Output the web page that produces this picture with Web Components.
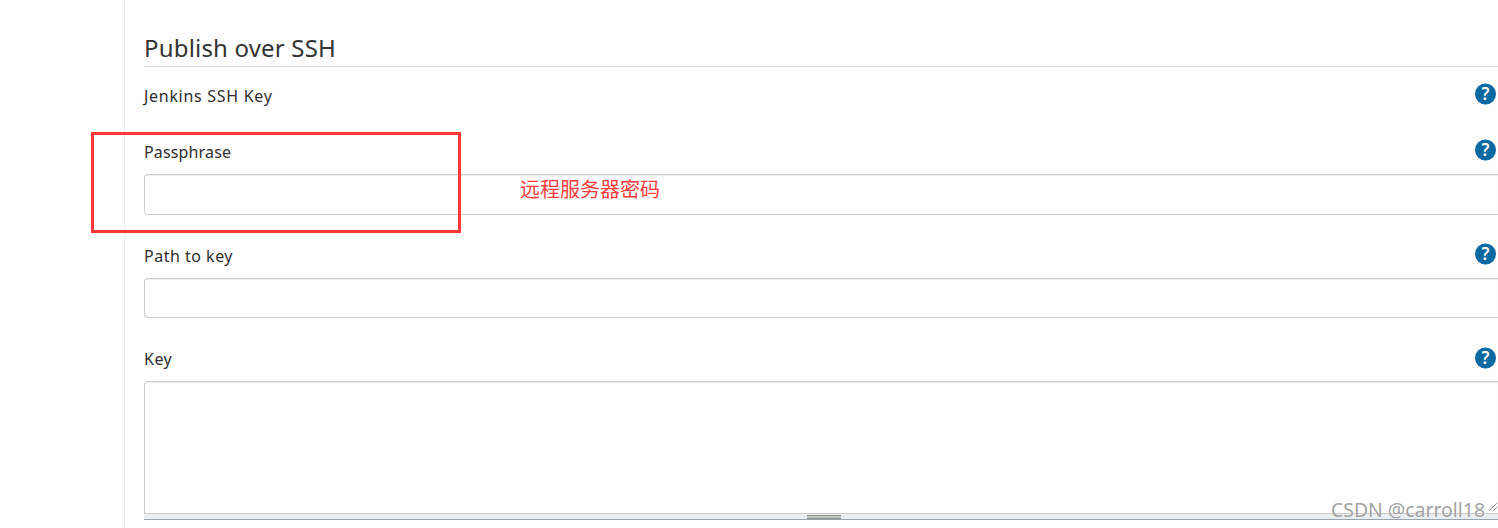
<!DOCTYPE html>
<html lang="en"><head><meta charset="utf-8"><title>Publish over SSH</title>
<style>
html,body{margin:0;padding:0;height:528px;overflow:hidden;background:#fff;font-family:"Noto Sans","Open Sans",sans-serif;color:#333}
</style></head><body>
<jk-page>
  <jk-section title-text="Publish over SSH">
    <jk-field label="Jenkins SSH Key" track=".7"></jk-field>
    <jk-field label="Passphrase" kind="input" track=".15" box="39" after="26"></jk-field>
    <jk-field label="Path to key" kind="input" track=".5" box="38" after="27"></jk-field>
    <jk-field label="Key" kind="textarea" track=".5" drop="2"></jk-field>
  </jk-section>
  <jk-note slot="over"></jk-note>
</jk-page>
<script>
class JkPage extends HTMLElement{constructor(){super();this.attachShadow({mode:'open'}).innerHTML=`<style>
:host{display:flex;width:1498px;height:528px;overflow:hidden;position:relative;box-sizing:border-box}
.side{flex:0 0 124px;border-right:1px solid #eceeef}
.main{flex:1;min-width:0;padding:30px 0 0 19px}
</style><div class="side"></div><div class="main"><slot></slot></div><slot name="over"></slot>`}}
class JkSection extends HTMLElement{constructor(){super();this.attachShadow({mode:'open'}).innerHTML=`<style>
:host{display:block}
h2{margin:0 0 14px;font:400 24px/35px "Noto Sans","Open Sans",sans-serif;color:#333;height:36px;border-bottom:1px solid #ddd;letter-spacing:.18px}
</style><h2></h2><slot></slot>`;this.shadowRoot.querySelector('h2').textContent=this.getAttribute('title-text')}}
class JkHelp extends HTMLElement{constructor(){super();this.attachShadow({mode:'open'}).innerHTML=`<style>
:host{display:block;width:22px;height:22px}
svg{display:block}text{font:600 17px "Noto Sans",sans-serif;fill:#fff}
</style><svg width="22" height="22" viewBox="0 0 22 22"><circle cx="11.5" cy="11" r="10.5" fill="#0b6aa2"/><text x="11.5" y="17" text-anchor="middle">?</text></svg>`}}
class JkField extends HTMLElement{constructor(){super();const k=this.getAttribute('kind');
let ctl='';if(k==='input')ctl='<div class="input"></div>';
if(k==='textarea')ctl='<div class="area"></div><div class="grip"><i></i></div>';
this.attachShadow({mode:'open'}).innerHTML=`<style>
:host{display:block;box-sizing:border-box}
.row{display:flex;justify-content:space-between;align-items:center;height:26px;padding-right:2px;font:400 16px/26px "Noto Sans","Open Sans",sans-serif;color:#2e2e2e}
.label{padding-top:4px}
.input{height:38px;margin-top:11px;border:1px solid #ccc;border-right:0;border-radius:4px 0 0 4px;box-shadow:inset 0 1px 1px rgba(0,0,0,.075)}
.area{height:131px;margin-top:10px;border:1px solid #ccc;border-bottom:0;border-right:0;border-radius:4px 0 0 0;box-shadow:inset 0 1px 1px rgba(0,0,0,.075)}
.grip{height:5px;background:#e9eef0;border-top:1px solid #ccc;border-bottom:1px solid #97a5ac;display:flex;justify-content:center;padding-left:6px}
.grip i{display:block;width:34px;margin-top:1px;background:linear-gradient(#8f9691 0 1px,#c2c6c3 1px 3px,#8f9691 3px);}
</style><div class="row"><span class="label"></span><jk-help></jk-help></div>${ctl}`;
const r=this.shadowRoot,l=r.querySelector('.label');l.textContent=this.getAttribute('label');
l.style.letterSpacing=(this.getAttribute('track')||0)+'px';
if(this.hasAttribute('drop'))l.style.paddingTop=this.getAttribute('drop')+'px';
if(this.hasAttribute('box'))r.querySelector('.input').style.height=this.getAttribute('box')+'px';
this.style.marginBottom=k==='input'?this.getAttribute('after')+'px':(k?'0':'30px');
}}
class JkNote extends HTMLElement{constructor(){super();this.attachShadow({mode:'open'}).innerHTML=`<style>
:host{display:contents}
.box{position:absolute;left:91px;top:132px;width:364px;height:95px;border:3px solid #ff3636;}
.txt{position:absolute;left:520px;top:175px;font:20px/28px "Noto Sans CJK SC",sans-serif;color:#ff3b3b;white-space:nowrap}
.mark{position:absolute;left:1331px;top:496px;font:19.4px/28px "Noto Sans","Open Sans",sans-serif;color:rgba(120,120,120,.7);white-space:nowrap;text-shadow:0 0 1px #fff}
.rz{position:absolute;left:1488px;top:502px}
</style><div class="box"></div><div class="txt">远程服务器密码</div><div class="mark">CSDN @carroll18</div>
<svg class="rz" width="10" height="10" viewBox="0 0 10 10"><path d="M1 9 9 1M5 9 9 5" stroke="#888" fill="none"/></svg>`}}
customElements.define('jk-help',JkHelp);
customElements.define('jk-field',JkField);
customElements.define('jk-section',JkSection);
customElements.define('jk-note',JkNote);
customElements.define('jk-page',JkPage);
</script>
</body></html>
